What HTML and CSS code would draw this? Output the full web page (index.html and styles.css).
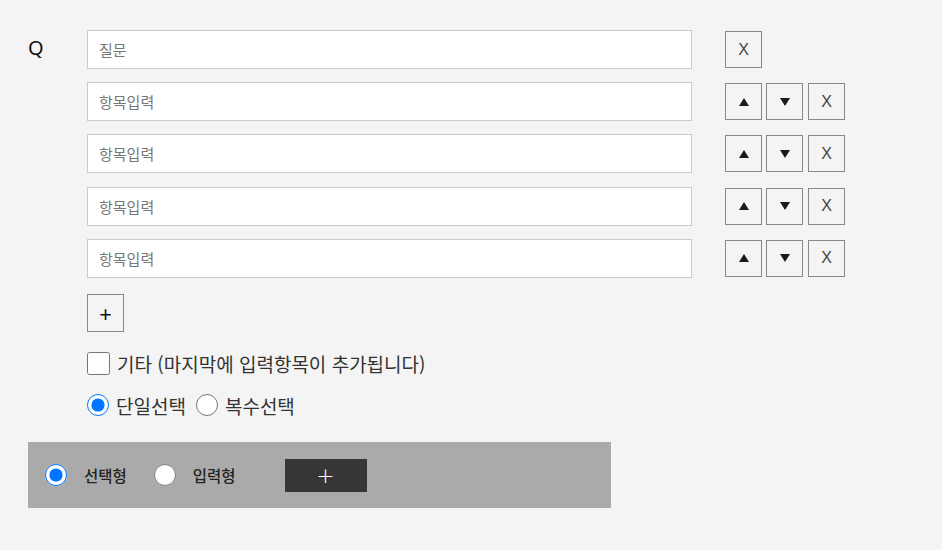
FILE: index.html
```html
<!DOCTYPE html>
<html lang="ko">
<head>
<meta charset="utf-8">
<link rel="stylesheet" href="styles.css">
</head>
<body>
<div class="page">
  <div class="row">
    <div class="q">Q</div>
    <input class="field" type="text" placeholder="질문">
    <div class="btns"><button class="sq x">X</button></div>
  </div>
  <div class="row">
    <div class="q"></div>
    <input class="field" type="text" placeholder="항목입력">
    <div class="btns"><button class="sq"><span class="tri up"></span></button><button class="sq"><span class="tri down"></span></button><button class="sq x">X</button></div>
  </div>
  <div class="row">
    <div class="q"></div>
    <input class="field" type="text" placeholder="항목입력">
    <div class="btns"><button class="sq"><span class="tri up"></span></button><button class="sq"><span class="tri down"></span></button><button class="sq x">X</button></div>
  </div>
  <div class="row">
    <div class="q"></div>
    <input class="field" type="text" placeholder="항목입력">
    <div class="btns"><button class="sq"><span class="tri up"></span></button><button class="sq"><span class="tri down"></span></button><button class="sq x">X</button></div>
  </div>
  <div class="row">
    <div class="q"></div>
    <input class="field" type="text" placeholder="항목입력">
    <div class="btns"><button class="sq"><span class="tri up"></span></button><button class="sq"><span class="tri down"></span></button><button class="sq x">X</button></div>
  </div>
  <div class="opts">
    <button class="sq plus">+</button>
    <label class="check"><input type="checkbox"> 기타 (마지막에 입력항목이 추가됩니다)</label>
    <div class="choice">
      <label class="opt"><input type="radio" name="m" checked>단일선택</label>
      <label class="opt"><input type="radio" name="m">복수선택</label>
    </div>
  </div>
  <div class="bar">
    <label class="bopt"><input type="radio" name="t" checked>선택형</label>
    <label class="bopt"><input type="radio" name="t">입력형</label>
    <button class="add">+</button>
  </div>
</div>
</body>
</html>
```
FILE: styles.css
```css
html, body {
  margin: 0;
  padding: 0;
  background: #f4f4f4;
  font-family: "Noto Sans CJK KR", "Noto Sans", sans-serif;
  color: #222;
}
.page {
  padding: 30px 0 0 28px;
}
.row {
  display: flex;
  align-items: center;
  height: 39px;
  margin-bottom: 13.2px;
}
.q {
  width: 59px;
  font-family: "Noto Sans", "Noto Sans CJK KR", sans-serif;
  font-size: 20px;
  color: #111;
  align-self: flex-start;
  line-height: 36px;
}
.field {
  box-sizing: border-box;
  width: 605px;
  height: 39px;
  border: 1px solid #cbcbcb;
  background: #fff;
  padding: 0 11px;
  font-family: "Noto Sans CJK KR", sans-serif;
  font-size: 15px;
  outline: none;
}
.field::placeholder {
  color: #777;
}
.btns {
  display: flex;
  gap: 4px;
  margin-left: 33px;
}
.sq {
  box-sizing: border-box;
  width: 37px;
  height: 37px;
  border: 1px solid #888;
  background: #f4f4f4;
  padding: 0;
  display: flex;
  align-items: center;
  justify-content: center;
}
.x {
  font-family: "Liberation Sans", sans-serif;
  font-weight: normal;
  font-size: 16px;
  color: #444;
}
.btns .sq.x:not(:first-child) {
  margin-left: 1px;
}
.tri {
  width: 0;
  height: 0;
  border-left: 5.5px solid transparent;
  border-right: 5.5px solid transparent;
}
.tri.up {
  border-bottom: 8px solid #1a1a1a;
}
.tri.down {
  border-top: 8px solid #1a1a1a;
}
.opts {
  padding-left: 59px;
  display: flex;
  flex-direction: column;
  align-items: flex-start;
}
.plus {
  margin-top: 3px;
  height: 38px;
  font-size: 22px;
  font-family: "Noto Sans", sans-serif;
  color: #111;
  line-height: 1;
}
.check {
  margin-top: 20px;
  display: flex;
  align-items: center;
  font-size: 19px;
  color: #333;
  height: 23px;
}
.check input {
  width: 23px;
  height: 23px;
  margin: 0 7px 0 0;
}
.choice {
  margin-top: 17px;
  display: flex;
  align-items: center;
}
.opt {
  display: flex;
  align-items: center;
  font-size: 19px;
  color: #333;
  margin-right: 10px;
}
.opt input {
  width: 22px;
  height: 22px;
  margin: 0 7px 0 0;
}
.bar {
  margin-top: 23px;
  width: 583px;
  height: 66px;
  background: #aaa;
  display: flex;
  align-items: center;
  padding-left: 17px;
  box-sizing: border-box;
}
.bopt {
  display: flex;
  align-items: center;
  font-size: 15.5px;
  font-weight: 500;
  color: #222;
}
.bopt input {
  width: 22px;
  height: 22px;
  margin: 0 17px 0 0;
}
.bopt:first-child {
  margin-right: 27px;
}
.add {
  margin-left: 49px;
  margin-top: 1px;
  width: 82px;
  height: 33px;
  border: none;
  background: #363636;
  color: #fff;
  font-size: 22px;
  font-family: "DejaVu Sans", sans-serif;
  font-weight: 200;
  padding: 0;
}
```
